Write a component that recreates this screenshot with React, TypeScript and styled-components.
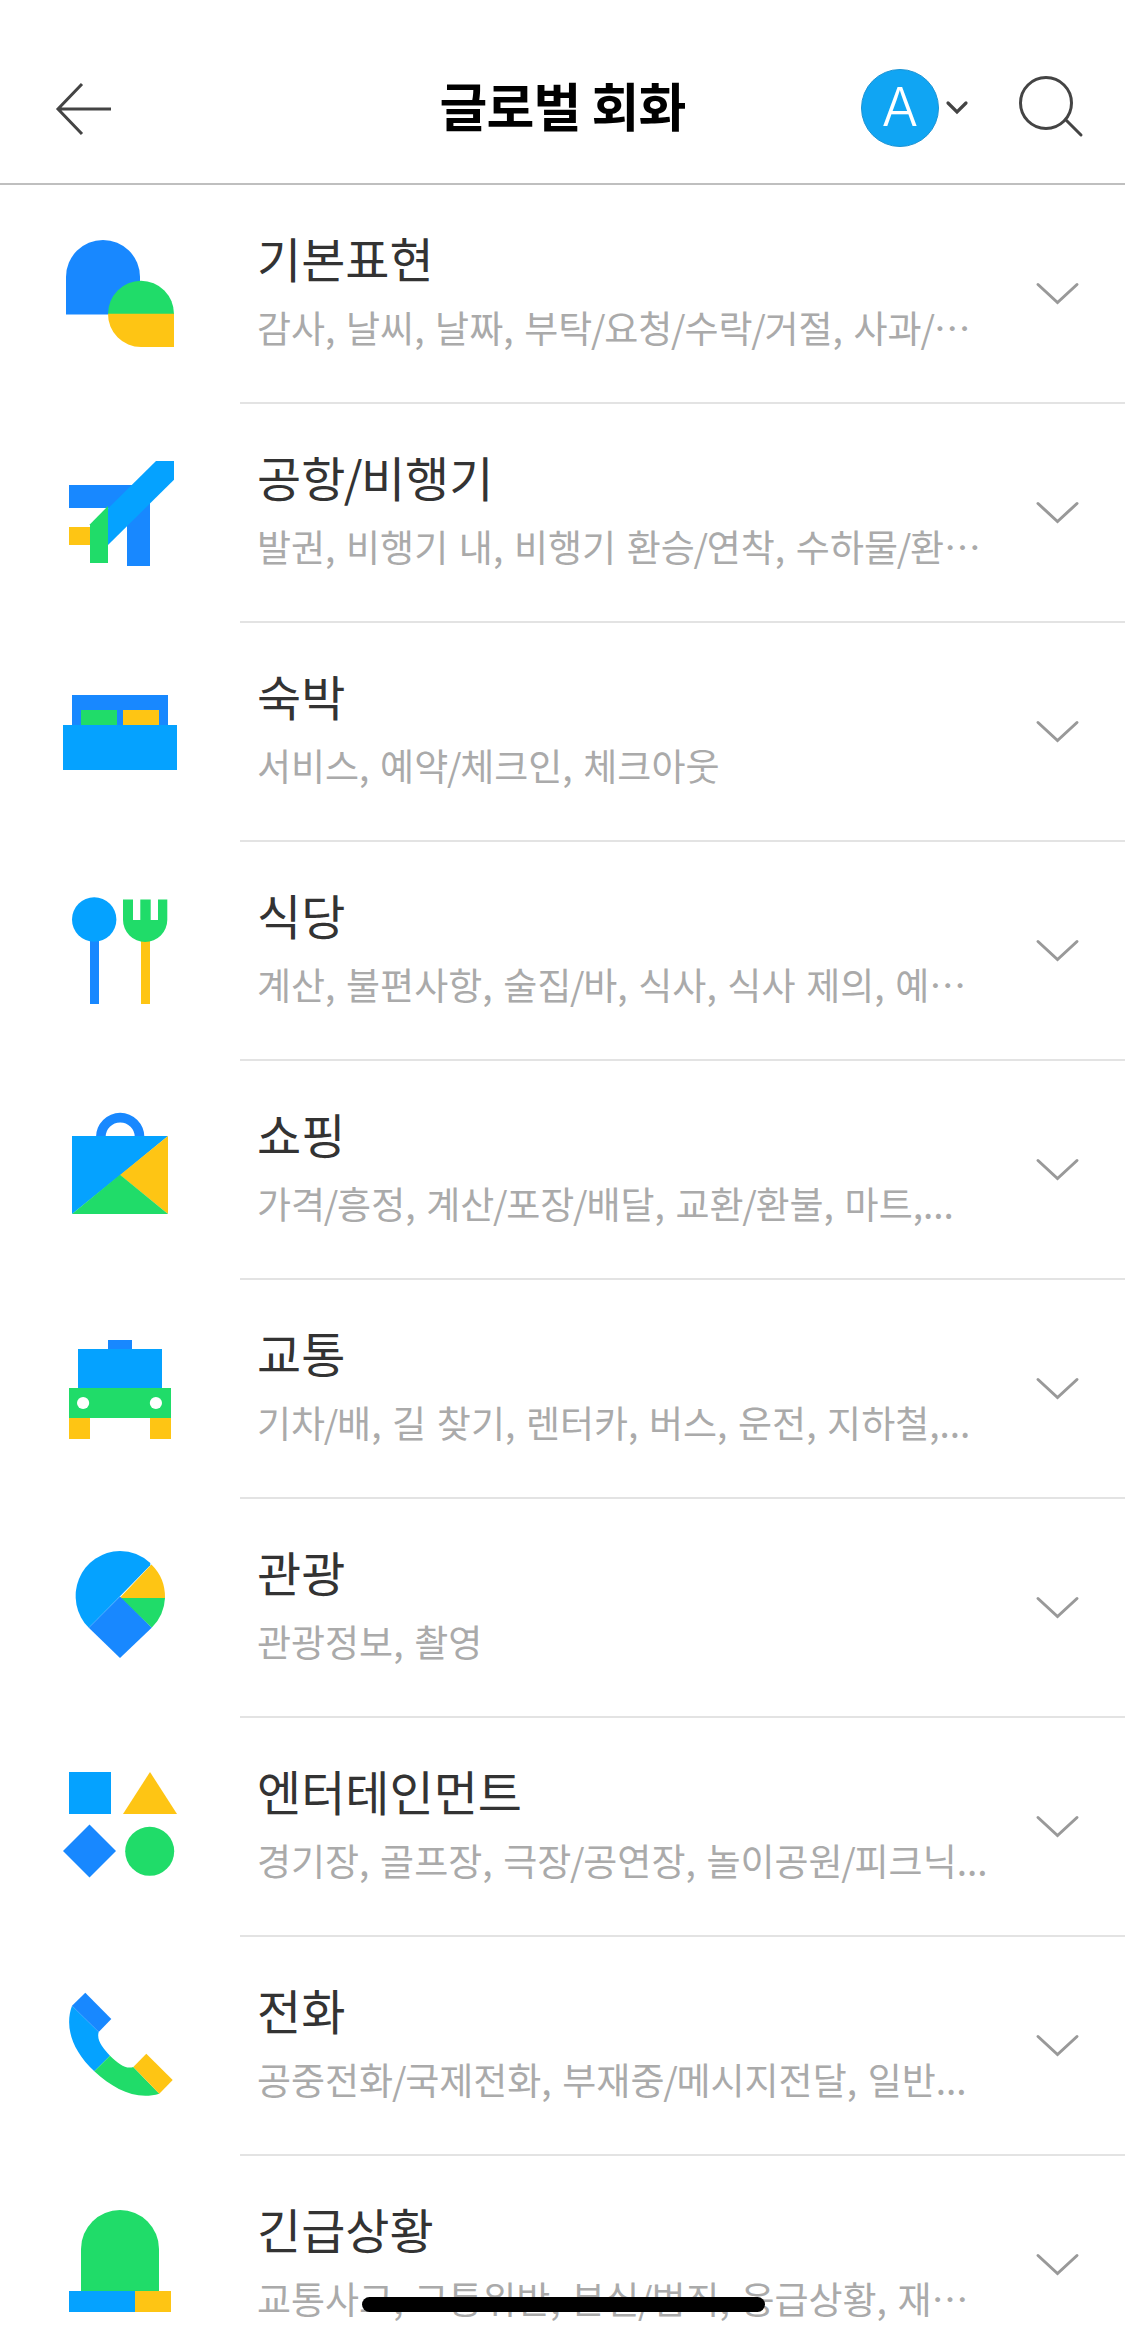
import React from "react";
import styled, { createGlobalStyle } from "styled-components";

const BLUE = "#1888ff";
const SKY = "#05a2ff";
const GREEN = "#20dc69";
const YELLOW = "#fec514";

const GlobalStyle = createGlobalStyle`
  * { box-sizing: border-box; }
  html, body { margin: 0; padding: 0; background: #fff; }
  body {
    font-family: "Noto Sans CJK KR", "Noto Sans", sans-serif;
    overflow: hidden;
  }
  button { border: 0; padding: 0; background: none; font: inherit; color: inherit; }
  h1, h2, p, ul { margin: 0; padding: 0; }
  svg { display: block; }
`;

const Screen = styled.main`
  width: 1125px;
  height: 2336px;
  overflow: hidden;
  background: #fff;
`;

const Header = styled.header`
  display: grid;
  grid-template-columns: 420px 1fr 420px;
  align-items: center;
  height: 185px;
  padding-top: 33px;
  border-bottom: 2px solid #bfbfbf;
`;

const BackButton = styled.button`
  width: 60px;
  margin-left: 54px;
  padding-top: 2px;
`;

const Title = styled.h1`
  padding-bottom: 6px;
  text-align: center;
  font-size: 52px;
  line-height: 72px;
  font-weight: 700;
  letter-spacing: -0.8px;
  color: #000;
  white-space: nowrap;
`;

const Actions = styled.div`
  display: flex;
  align-items: center;
  padding-left: 156px;
`;

const Profile = styled.button`
  display: flex;
  align-items: center;
  gap: 5px;
`;

const Avatar = styled.span`
  display: flex;
  align-items: center;
  justify-content: center;
  width: 78px;
  height: 78px;
  padding-bottom: 3px;
  border: 1px solid #1b93d4;
  border-radius: 50%;
  background: #10a5f3;
  color: #fff;
  font-family: Inter, sans-serif;
  font-size: 54px;
  font-weight: 300;
  line-height: 1;
`;

const SearchButton = styled.button`
  margin-left: 49px;
`;

const List = styled.ul`
  list-style: none;
`;

const Row = styled.li`
  display: grid;
  grid-template-columns: 240px 1fr;
  height: 219px;
`;

const IconCell = styled.div`
  padding: 50px 0 0 60px;
`;

const Body = styled.div`
  display: grid;
  grid-template-columns: 1fr 92px;
  border-bottom: 2px solid #e3e3e3;
`;

const Texts = styled.div`
  padding: 37px 0 0 17px;
  white-space: nowrap;
`;

const Name = styled.h2`
  font-size: 48px;
  line-height: 70px;
  font-weight: 400;
  color: #333;
`;

const Summary = styled.p`
  margin-top: 8px;
  font-size: 37px;
  line-height: 54px;
  word-spacing: 2.4px;
  color: #aaa;
`;

const Slash = styled.span`
  margin: 0 -0.034em;
`;

const ExpandButton = styled.button`
  align-self: start;
  margin-top: 94px;
`;

const HomeIndicator = styled.div`
  position: fixed;
  left: 362px;
  top: 2297px;
  width: 403px;
  height: 15px;
  border-radius: 8px;
  background: #000;
`;

const icons = {
  basic: (
    <>
      <path fill={BLUE} d="M6 79.6V42a37 37 0 0 1 74 0v37.6z" />
      <path fill={GREEN} d="M48 79a33 33.2 0 0 1 66 0z" />
      <path fill={YELLOW} d="M48 78.7h66V112H81a33 33 0 0 1-33-33.3z" />
    </>
  ),
  flight: (
    <>
      <path fill={BLUE} d="M9 31h65v23H9zM67 55l23-10v67H67z" />
      <path fill={SKY} d="M96 7h18v18.7L48 91V54.5z" />
      <path fill={YELLOW} d="M9 73h21v18H9z" />
      <path fill={GREEN} d="M30 70.3L48 52v57H30z" />
    </>
  ),
  lodging: (
    <>
      <path fill={BLUE} d="M12 22h96v31H12z" />
      <path fill={GREEN} d="M21 37h36v16H21z" />
      <path fill={YELLOW} d="M63 37h36v16H63z" />
      <path fill={SKY} d="M3 52h114v45H3z" />
    </>
  ),
  restaurant: (
    <>
      <path fill={BLUE} d="M30 45h9v67h-9z" />
      <circle fill={SKY} cx="34.2" cy="27.5" r="22.2" />
      <path fill={YELLOW} d="M81 45h9v67h-9z" />
      <path
        fill={GREEN}
        d="M63 7.5h10V28h7.3V7.5h10.4V28H98V7.5h9.3v20.3a22.15 22.15 0 0 1-44.3 0z"
      />
    </>
  ),
  shopping: (
    <>
      <path
        fill={BLUE}
        d="M36 26a24.2 24.2 0 0 1 48.4 0h-9.6a14.6 14.6 0 0 0-29.2 0z"
      />
      <path fill={SKY} d="M12 25h96L60 64.5 12 103z" />
      <path fill={YELLOW} d="M108 25v78L60 64z" />
      <path fill={GREEN} d="M12 103l48-39.2 48 39.2z" />
    </>
  ),
  transport: (
    <>
      <path fill={BLUE} d="M48 10h24v9H48z" />
      <path fill={SKY} d="M18 19h84v39H18z" />
      <path fill={GREEN} d="M9 58h102v30H9z" />
      <path fill={YELLOW} d="M9 88h21v21H9zM90 88h21v21H90z" />
      <circle fill="#fff" cx="23.1" cy="73" r="6.1" />
      <circle fill="#fff" cx="95.9" cy="73" r="6.1" />
    </>
  ),
  sightseeing: (
    <>
      <path fill={SKY} d="M60 47.2L28.8 78.8A45 45 0 0 1 60 2a45 45 0 0 1 30.3 12v2.2z" />
      <path fill={YELLOW} d="M60.4 48.2l31-32.6A45.5 45.5 0 0 1 105 48.8v.4H61z" />
      <path fill={GREEN} d="M60.5 49H105a45 45 0 0 1-13.3 29.8z" />
      <path fill={BLUE} d="M60 47.4l31.7 31.4L60 109 28.8 78.8z" />
    </>
  ),
  entertainment: (
    <>
      <path fill={SKY} d="M9 4h42v42H9z" />
      <path fill={YELLOW} d="M90 4l27 42H63z" />
      <path fill={BLUE} d="M29.5 56.4L56 83l-26.5 26.6L3 83z" />
      <circle fill={GREEN} cx="89.7" cy="83.3" r="24.5" />
    </>
  ),
  phone: (
    <>
      <path
        fill={SKY}
        d="M12 18.7C4.5 39 11.5 63 34.3 84.3L50 68.7C43 61 36.3 53.5 38.7 45z"
      />
      <path
        fill={GREEN}
        d="M34.3 84.3C54 102.5 76 113.5 99.3 106.7L73.3 80C66 82.5 58.5 77 50 68.7z"
      />
      <path fill={BLUE} d="M25.3 5.7l26 26.3-12.6 13L12 18.7z" />
      <path fill={YELLOW} d="M86.3 66.7L112.7 93l-13.4 13.7L73.3 80z" />
    </>
  ),
  emergency: (
    <>
      <path fill={GREEN} d="M21 86V43a39 39 0 0 1 78 0v43z" />
      <path fill={SKY} d="M9 85h66v21H9z" />
      <path fill={YELLOW} d="M75 85h36v21H75z" />
    </>
  ),
};

type Category = { icon: keyof typeof icons; name: string; summary: string };

const categories: Category[] = [
  { icon: "basic", name: "기본표현", summary: "감사, 날씨, 날짜, 부탁/요청/수락/거절, 사과/⋯" },
  { icon: "flight", name: "공항/비행기", summary: "발권, 비행기 내, 비행기 환승/연착, 수하물/환⋯" },
  { icon: "lodging", name: "숙박", summary: "서비스, 예약/체크인, 체크아웃" },
  { icon: "restaurant", name: "식당", summary: "계산, 불편사항, 술집/바, 식사, 식사 제의, 예⋯" },
  { icon: "shopping", name: "쇼핑", summary: "가격/흥정, 계산/포장/배달, 교환/환불, 마트,..." },
  { icon: "transport", name: "교통", summary: "기차/배, 길 찾기, 렌터카, 버스, 운전, 지하철,..." },
  { icon: "sightseeing", name: "관광", summary: "관광정보, 촬영" },
  { icon: "entertainment", name: "엔터테인먼트", summary: "경기장, 골프장, 극장/공연장, 놀이공원/피크닉..." },
  { icon: "phone", name: "전화", summary: "공중전화/국제전화, 부재중/메시지전달, 일반..." },
  { icon: "emergency", name: "긴급상황", summary: "교통사고, 교통위반, 분실/범죄, 응급상황, 재⋯" },
];

/* Tightens the space around each slash. */
function withSlashes(text: string) {
  return text.split("/").map((part, i) => (
    <React.Fragment key={i}>
      {i > 0 && <Slash>/</Slash>}
      {part}
    </React.Fragment>
  ));
}

function CategoryRow({ icon, name, summary }: Category) {
  return (
    <Row>
      <IconCell>
        <svg width="120" height="120" viewBox="0 0 120 120">
          {icons[icon]}
        </svg>
      </IconCell>
      <Body>
        <Texts>
          <Name>{withSlashes(name)}</Name>
          <Summary>{withSlashes(summary)}</Summary>
        </Texts>
        <ExpandButton aria-label="펼치기">
          <svg width="50" height="30" viewBox="0 0 50 30" fill="none" stroke="#999" strokeWidth="3" strokeLinecap="round">
            <path d="M5 5.5l19.5 18 19.5-18" />
          </svg>
        </ExpandButton>
      </Body>
    </Row>
  );
}

export default function App() {
  return (
    <Screen>
      <GlobalStyle />
      <Header>
        <BackButton aria-label="뒤로">
          <svg width="60" height="56" viewBox="0 0 60 56" fill="none" stroke="#444" strokeWidth="3">
            <path d="M28 3L4 28l24 25M4 28h53" />
          </svg>
        </BackButton>
        <Title>글로벌 회화</Title>
        <Actions>
          <Profile aria-label="프로필">
            <Avatar>A</Avatar>
            <svg width="26" height="20" viewBox="0 0 26 20" fill="none" stroke="#444" strokeWidth="3.2" strokeLinecap="round">
              <path d="M4 5l9 9 9-9" />
            </svg>
          </Profile>
          <SearchButton aria-label="검색">
            <svg width="68" height="66" viewBox="0 0 68 66" fill="none" stroke="#444" strokeWidth="3" strokeLinecap="round">
              <circle cx="27" cy="28" r="25.5" />
              <path d="M47 45l15 15" />
            </svg>
          </SearchButton>
        </Actions>
      </Header>
      <List>
        {categories.map((category) => (
          <CategoryRow key={category.icon} {...category} />
        ))}
      </List>
      <HomeIndicator />
    </Screen>
  );
}
